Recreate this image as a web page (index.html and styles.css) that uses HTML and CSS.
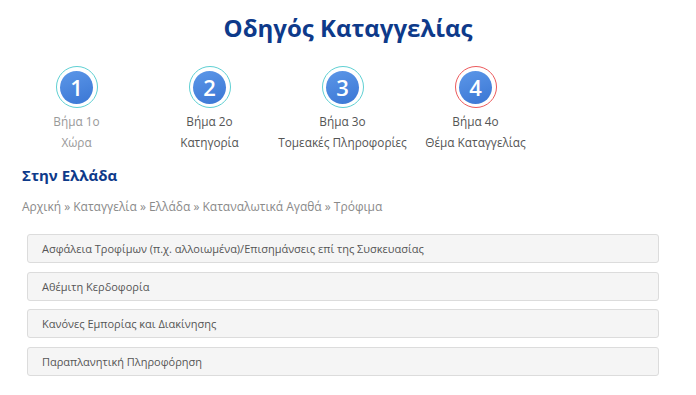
FILE: index.html
```html
<!doctype html>
<html lang="el">
<head>
  <meta charset="UTF-8">
  <title>Οδηγός Καταγγελίας</title>
  <link rel="stylesheet" href="styles.css">
</head>
<body>
  <div class="page">
    <h1 class="title">Οδηγός Καταγγελίας</h1>

    <div class="steps">
      <div class="step done">
        <div class="badge"><span>1</span></div>
        <div class="step-label">Βήμα 1ο</div>
        <div class="step-name">Χώρα</div>
      </div>
      <div class="step">
        <div class="badge"><span>2</span></div>
        <div class="step-label">Βήμα 2ο</div>
        <div class="step-name">Κατηγορία</div>
      </div>
      <div class="step">
        <div class="badge"><span>3</span></div>
        <div class="step-label">Βήμα 3ο</div>
        <div class="step-name">Τομεακές Πληροφορίες</div>
      </div>
      <div class="step current">
        <div class="badge"><span>4</span></div>
        <div class="step-label">Βήμα 4ο</div>
        <div class="step-name">Θέμα Καταγγελίας</div>
      </div>
    </div>

    <div class="section">
      <h2 class="section-title">Στην Ελλάδα</h2>
      <div class="breadcrumb">Αρχική » Καταγγελία » Ελλάδα » Καταναλωτικά Αγαθά » Τρόφιμα</div>

      <ul class="topics">
        <li>Ασφάλεια Τροφίμων (π.χ. αλλοιωμένα)/Επισημάνσεις επί της Συσκευασίας</li>
        <li>Αθέμιτη Κερδοφορία</li>
        <li>Κανόνες Εμπορίας και Διακίνησης</li>
        <li>Παραπλανητική Πληροφόρηση</li>
      </ul>
    </div>
  </div>
</body>
</html>
```

FILE: styles.css
```css
body {
  margin: 0;
  background: #fff;
  font-family: 'Open Sans', 'Noto Sans', sans-serif;
  color: #555;
}
.page {
  padding: 0 8px;
}
.title {
  margin: 0;
  padding-top: 10px;
  text-align: center;
  font-size: 24px;
  font-weight: 700;
  color: #0e3a8a;
  line-height: 36px;
}
.steps {
  display: grid;
  grid-template-columns: repeat(4, 133px);
  margin: 20px 0 0 2px;
}
.step {
  display: flex;
  flex-direction: column;
  align-items: center;
  font-size: 11.8px;
  color: #555;
}
.badge {
  box-sizing: border-box;
  width: 42px;
  height: 42px;
  border-radius: 50%;
  border: 1.5px solid #5fd0d3;
  padding: 3.5px;
  background: #fff;
}
.current .badge {
  border-color: #ec5a5c;
}
.badge span {
  display: flex;
  align-items: center;
  justify-content: center;
  width: 100%;
  height: 100%;
  border-radius: 50%;
  background: linear-gradient(160deg, #5c97e8 0%, #3a76d4 100%);
  color: #fff;
  font-size: 22px;
  font-weight: 600;
}
.step-label {
  margin-top: 5px;
  line-height: 16px;
}
.step-name {
  margin-top: 5px;
  line-height: 16px;
}
.done {
  color: #999;
}
.section {
  padding: 0 14px;
}
.section-title {
  margin: 15px 0 0;
  font-size: 15px;
  font-weight: 700;
  color: #0e3a8a;
  line-height: 20px;
}
.breadcrumb {
  margin-top: 14px;
  font-size: 12px;
  color: #8a8a8a;
  line-height: 16px;
}
.topics {
  list-style: none;
  margin: 19px 0 0 5px;
  padding: 0;
  width: 632px;
}
.topics li {
  box-sizing: border-box;
  height: 29px;
  line-height: 27px;
  margin-bottom: 8.67px;
  padding: 0 14px;
  background: #f5f5f5;
  border: 1px solid #dcdcdc;
  border-radius: 3px;
  font-size: 11px;
  color: #555;
}
```
